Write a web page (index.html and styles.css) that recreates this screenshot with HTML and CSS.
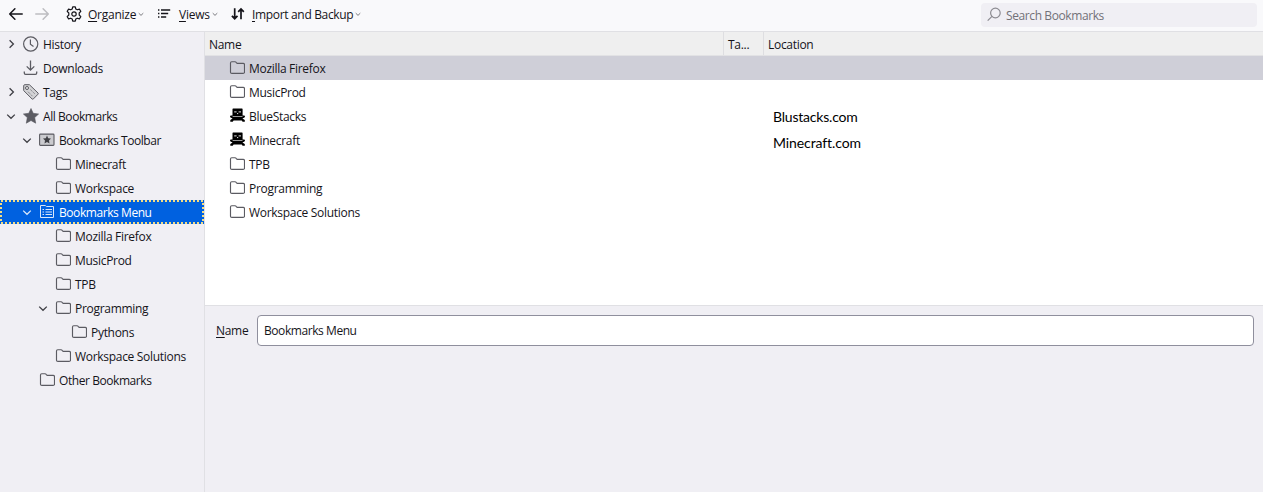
FILE: index.html
```
<!DOCTYPE html>
<html lang="en">
<head>
<meta charset="utf-8">
<title>Library</title>
<link rel="stylesheet" href="styles.css">
</head>
<body>
<svg class="defs" aria-hidden="true">
  <symbol id="folder" viewBox="-.7 0 16 16"><path d="M.8 12.2V3Q.8 1.7 2 1.7H5.3Q6 1.7 6.5 2.3L7.4 3.3H13.4Q14.8 3.3 14.8 4.6V12.2Q14.8 13.4 13.4 13.4H2.2Q.8 13.4 .8 12.2Z" fill="none" stroke="currentColor" stroke-width="1.15"/></symbol>
  <symbol id="right" viewBox="0 0 10 10"><path d="M3.6 1.3 7.4 5 3.6 8.7" fill="none" stroke="currentColor" stroke-width="1.3"/></symbol>
  <symbol id="down" viewBox="0 0 10 10"><path d="M1.2 3.6 5 7.3 8.8 3.6" fill="none" stroke="currentColor" stroke-width="1.3"/></symbol>
  <symbol id="clock" viewBox="0 0 16 16"><g fill="none" stroke="currentColor" stroke-width="1.2"><circle cx="7.7" cy="8" r="7.1"/><path d="M7.4 3.4V8.3L10.5 10.4"/></g></symbol>
  <symbol id="download" viewBox="0 0 16 16"><path d="M7.5.5V10M3.7 6.4 7.5 10.2 11.3 6.4M1.3 11.5V13Q1.3 14.3 2.6 14.3H12.4Q13.7 14.3 13.7 13V11.5" fill="none" stroke="currentColor" stroke-width="1.3"/></symbol>
  <symbol id="tag" viewBox="0 0 16 16"><path d="M.7 1.8Q.7.7 1.8.7H6.4L15 9Q15.6 9.6 15 10.2L10.4 14.9Q9.7 15.5 9 14.9L.7 6.6Z" fill="#d3d3d6" stroke="currentColor"/><circle cx="4" cy="4" r="1.5" fill="#f3f3f5" stroke="currentColor"/><path d="M7.3 5.5 11.8 9.8M5 7.7 9.5 12.2" stroke="#8b8b91" stroke-dasharray="3 1"/></symbol>
  <symbol id="star" viewBox="0 0 16 16"><path d="M8 .5 10.2 5.3 15.6 6 11.7 9.6 12.7 15.2 8 12.5 3.3 15.2 4.3 9.6.4 6 5.8 5.3Z" fill="currentColor" stroke="currentColor" stroke-width=".6" stroke-linejoin="round"/></symbol>
  <symbol id="toolbar" viewBox="0 0 16 16"><rect x=".6" y="2.1" width="14.4" height="11.3" rx=".8" fill="#cbcbcf" stroke="currentColor" stroke-width="1.1"/><path d="M8 3.6 9.2 6.2 12 6.5 10 8.4 10.5 11.5 8 10.1 5.5 11.5 6 8.4 4 6.5 6.8 6.2Z" fill="#3f3f44"/></symbol>
  <symbol id="menu" viewBox="-1 0 16 16"><path d="M.5 13.5V1.5H5.3L6.4 2.5H13.5V13.5Z" fill="none" stroke="currentColor"/><path d="M2.5 5.5H4M5.5 5.5H12M2.5 8H4M5.5 8H12M2.5 10.5H4M5.5 10.5H12" stroke="currentColor"/></symbol>
  <symbol id="couch" viewBox="0 0 16 16"><path d="M4.1.6H13Q13.6.6 13.6 1.2V7.4H15Q16 7.4 16 8.4T15 9.8L13.4 10.6 15.8 12V13.8H13.6L12.7 12.4H4.6L3.7 13.8H1.3V12L3.6 10.6 2 9.8Q1 9.4 1 8.4T2 7.4H3.5V1.2Q3.5.6 4.1.6Z"/><path d="M5.2 3.9H7.6M9.6 3.9H12M8 5.6H9.2" stroke="#fff" stroke-width=".9"/><path d="M3.6 8.5H13.5" stroke="#fff" stroke-width=".6"/></symbol>
</svg>
<header class="toolbar">
  <svg class="nav-back" viewBox="0 0 16 16"><path d="M1.7 8H14.2M6.9 2.8 1.7 8 6.9 13.2" stroke-linecap="round" stroke-linejoin="round"/></svg>
  <svg class="nav-forward" viewBox="0 0 16 16"><path d="M1.8 8H14.3M9.1 2.8 14.3 8 9.1 13.2" stroke-linecap="round" stroke-linejoin="round"/></svg>
  <button class="tool organize"><svg class="tool-icon gear" viewBox="0 0 16 16"><path d="M6.7.8H9.3L9.8 3 11.3 3.8 13.4 3.1 14.8 5.3 13.2 7V9L14.8 10.7 13.4 12.9 11.3 12.2 9.8 13 9.3 15.2H6.7L6.2 13 4.7 12.2 2.6 12.9 1.2 10.7 2.8 9V7L1.2 5.3 2.6 3.1 4.7 3.8 6.2 3Z" stroke-linejoin="round"/><circle cx="8" cy="8" r="2.2"/></svg><span><u>O</u>rganize</span><svg class="drop"><use href="#down"/></svg></button>
  <button class="tool views"><svg class="tool-icon" viewBox="0 0 16 16"><path d="M1 4H2.4M4 4H13.2M1 7.5H2.4M4 7.5H11.2M1 11H2.4M4 11H9.2" stroke-width="1.3"/></svg><span><u>V</u>iews</span><svg class="drop"><use href="#down"/></svg></button>
  <button class="tool import"><svg class="tool-icon" viewBox="0 0 16 16"><path d="M4.7 2.3V12.7M1.9 9.8 4.7 12.7 7.5 9.8M11 13.3V3M8.2 5.9 11 3 13.8 5.9" stroke-width="1.7"/></svg><span><u>I</u>mport and Backup</span><svg class="drop"><use href="#down"/></svg></button>
  <div class="search"><svg viewBox="0 0 16 16"><circle cx="9.4" cy="6" r="4.8"/><path d="M6 9.4 1.7 13.7"/></svg><span>Search Bookmarks</span></div>
</header>
<div class="workspace">
  <nav class="sidebar">
    <div class="item"><svg class="twisty"><use href="#right"/></svg><svg class="icon"><use href="#clock"/></svg><span>History</span></div>
    <div class="item"><i class="twisty"></i><svg class="icon"><use href="#download"/></svg><span>Downloads</span></div>
    <div class="item"><svg class="twisty"><use href="#right"/></svg><svg class="icon"><use href="#tag"/></svg><span>Tags</span></div>
    <div class="item tight"><svg class="twisty"><use href="#down"/></svg><svg class="icon"><use href="#star"/></svg><span>All Bookmarks</span></div>
    <div class="item level-1 tight"><svg class="twisty"><use href="#down"/></svg><svg class="icon"><use href="#toolbar"/></svg><span>Bookmarks Toolbar</span></div>
    <div class="item level-2"><i class="twisty"></i><svg class="icon"><use href="#folder"/></svg><span>Minecraft</span></div>
    <div class="item level-2"><i class="twisty"></i><svg class="icon"><use href="#folder"/></svg><span>Workspace</span></div>
    <div class="item level-1 active tight"><svg class="twisty"><use href="#down"/></svg><svg class="icon"><use href="#menu"/></svg><span>Bookmarks Menu</span><svg class="focus-ring"><rect x="1" y="1" width="202" height="22"/></svg></div>
    <div class="item level-2"><i class="twisty"></i><svg class="icon"><use href="#folder"/></svg><span>Mozilla Firefox</span></div>
    <div class="item level-2"><i class="twisty"></i><svg class="icon"><use href="#folder"/></svg><span>MusicProd</span></div>
    <div class="item level-2"><i class="twisty"></i><svg class="icon"><use href="#folder"/></svg><span>TPB</span></div>
    <div class="item level-2"><svg class="twisty"><use href="#down"/></svg><svg class="icon"><use href="#folder"/></svg><span>Programming</span></div>
    <div class="item level-3"><i class="twisty"></i><svg class="icon"><use href="#folder"/></svg><span>Pythons</span></div>
    <div class="item level-2"><i class="twisty"></i><svg class="icon"><use href="#folder"/></svg><span>Workspace Solutions</span></div>
    <div class="item level-1 tight"><i class="twisty"></i><svg class="icon"><use href="#folder"/></svg><span>Other Bookmarks</span></div>
  </nav>
  <main class="content">
    <section class="list">
      <div class="columns"><span>Name</span><span>Ta...</span><span>Location</span></div>
      <div class="entry selected"><div><svg class="icon"><use href="#folder"/></svg><span>Mozilla Firefox</span></div></div>
      <div class="entry"><div><svg class="icon"><use href="#folder"/></svg><span>MusicProd</span></div></div>
      <div class="entry"><div><svg class="icon couch"><use href="#couch"/></svg><span>BlueStacks</span></div><span class="location">Blustacks.com</span></div>
      <div class="entry"><div><svg class="icon couch"><use href="#couch"/></svg><span>Minecraft</span></div><span class="location second">Minecraft.com</span></div>
      <div class="entry"><div><svg class="icon"><use href="#folder"/></svg><span>TPB</span></div></div>
      <div class="entry"><div><svg class="icon"><use href="#folder"/></svg><span>Programming</span></div></div>
      <div class="entry"><div><svg class="icon"><use href="#folder"/></svg><span>Workspace Solutions</span></div></div>
    </section>
    <section class="details"><label for="name"><u>N</u>ame</label><input id="name" class="tight" value="Bookmarks Menu"></section>
  </main>
</div>
</body>
</html>
```
FILE: styles.css
```
* { box-sizing: border-box; }
body {
  margin: 0;
  height: 492px;
  display: flex;
  flex-direction: column;
  overflow: hidden;
  font: 12px/24px "Open Sans", sans-serif;
  letter-spacing: -0.3px;
  color: #15141a;
  background: #f0eff4;
}
.defs { position: absolute; width: 0; height: 0; }
svg { flex: none; overflow: visible; }
span { white-space: nowrap; }
u { text-decoration-thickness: 1px; text-underline-offset: 2px; }
.toolbar {
  height: 32px;
  flex: none;
  display: flex;
  align-items: center;
  padding: 0 6px 3px 8px;
  background: #f9f9fb;
  border-bottom: 1px solid #e0e0e4;
}
.toolbar svg { fill: none; stroke: #15141a; stroke-width: 1.5; }
.nav-back, .nav-forward { width: 16px; height: 16px; }
.nav-forward { margin-left: 10px; }
.toolbar .nav-forward { stroke: #bdbdc1; }
.tool {
  display: flex;
  align-items: center;
  padding: 0;
  border: 0;
  background: none;
  color: inherit;
  font: inherit;
  letter-spacing: -0.25px;
}
.tool span { padding-top: 2px; }
.tool-icon { width: 16px; height: 16px; margin-right: 6px; }
.toolbar .gear { stroke-width: 1.2; }
.organize { margin-left: 16px; width: 78px; }
.views { margin-left: 13px; width: 60px; }
.import { margin-left: 13px; letter-spacing: -0.33px; }
.tool .drop { width: 6px; height: 6px; margin-left: 2px; color: #55555a; stroke: none; }
.search {
  width: 276px;
  height: 24px;
  margin: 2px 0 0 auto;
  display: flex;
  align-items: center;
  border-radius: 4px;
  background: #f0eff4;
  color: #727178;
  letter-spacing: -0.4px;
}
.search span { padding-top: 1px; }
.search svg { width: 16px; height: 16px; margin: 0 4px 0 5px; stroke: #8b8a90; stroke-width: 1.2; }
.workspace { flex: 1; display: flex; min-height: 0; }
.sidebar { width: 205px; flex: none; border-right: 1px solid #e0e0e4; }
.item {
  position: relative;
  height: 24px;
  display: flex;
  align-items: center;
  padding-left: 6px;
}
.item > span { padding-top: 2px; }
.tight { letter-spacing: -0.43px; }
.twisty { width: 10px; height: 10px; margin-right: 7px; flex: none; color: #3f3f45; }
.icon { width: 16px; height: 16px; margin-right: 4px; color: #5b5b62; }
.level-1 { padding-left: 22px; }
.level-2 { padding-left: 38px; }
.level-3 { padding-left: 54px; }
.active { background: #0061e0; color: #fff; }
.active .icon, .active .twisty { color: #d9e7fa; }
.focus-ring { position: absolute; inset: 0; width: 204px; height: 24px; fill: none; stroke: #f3dc83; stroke-width: 2; stroke-dasharray: 2 2; }
.content { flex: 1; display: flex; flex-direction: column; min-width: 0; }
.list { height: 274px; flex: none; background: #fff; border-bottom: 1px solid #e0e0e4; }
.columns, .entry { display: grid; grid-template-columns: 519px 40px 1fr; grid-template-rows: 100%; height: 24px; }
.columns { background: #efefef; border-bottom: 1px solid #e2e2e4; }
.columns span { padding: 1px 0 0 4px; border-right: 1px solid #dedee1; }
.columns span:last-child { border-right: 0; }
.entry > div { display: flex; align-items: center; padding-left: 24px; }
.entry > div span { padding-top: 2px; }
.selected { background: #cfcfd8; }
.entry .couch { color: #000; fill: #000; }
.location { grid-column: 3; padding: 1px 0 0 9px; font: 14px/24px Lato, sans-serif; letter-spacing: -0.2px; color: #000; }
.second { padding-top: 3px; letter-spacing: -0.1px; }
.details { display: flex; align-items: center; height: 50px; padding: 0 9px 1px 11px; }
.details label { width: 41px; }
.details input {
  flex: 1;
  height: 31px;
  padding: 0 6px;
  border: 1px solid #8f8f9d;
  border-radius: 4px;
  background: #fff;
  color: inherit;
  font: inherit;
}
```
